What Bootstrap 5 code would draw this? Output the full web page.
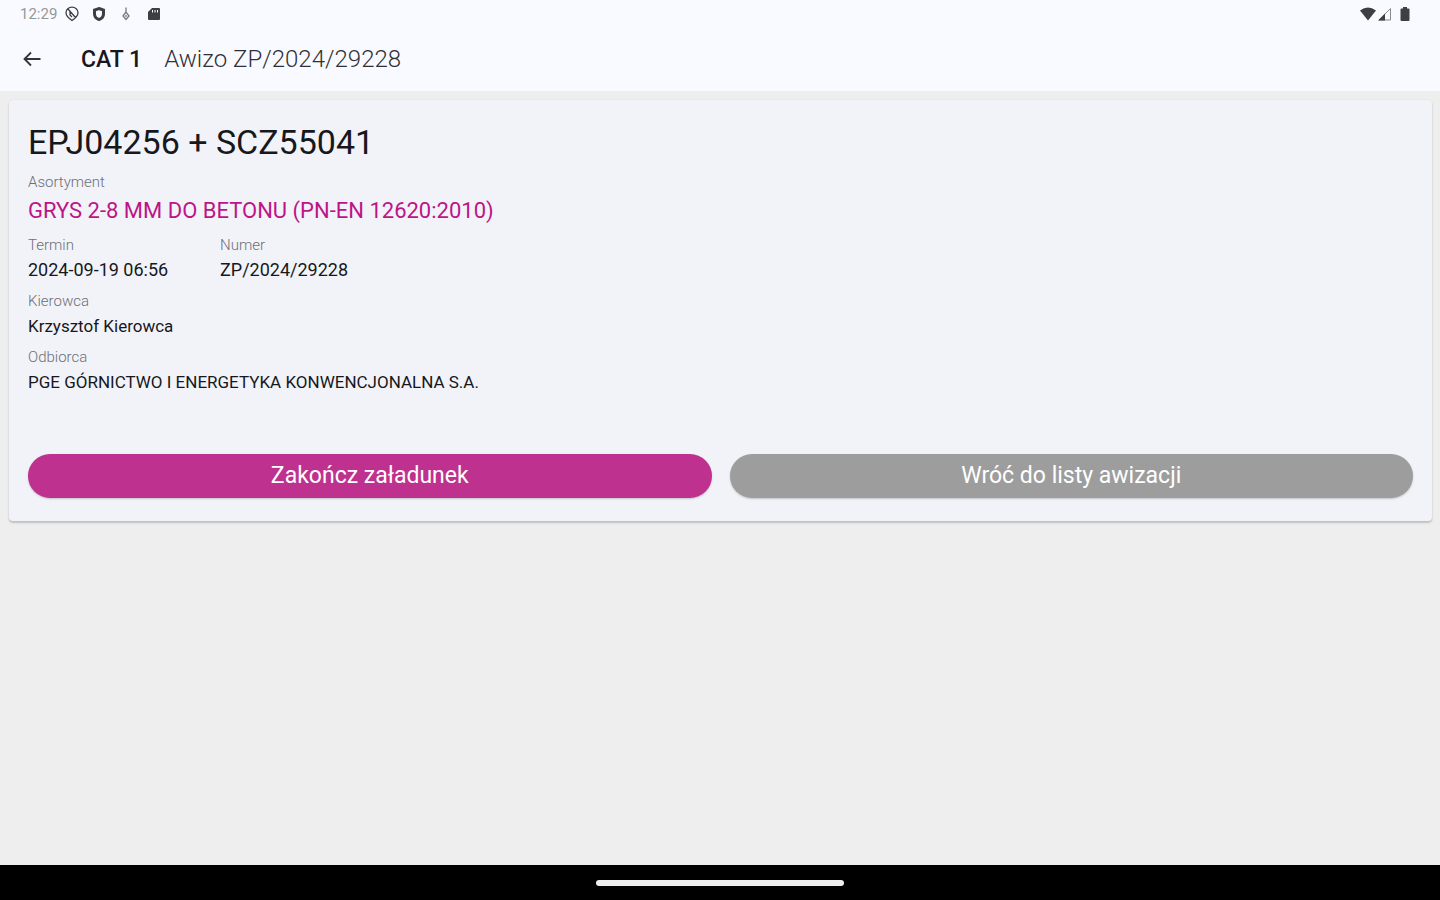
<!DOCTYPE html>
<html lang="pl">
<head>
<meta charset="utf-8">
<meta name="viewport" content="width=device-width, initial-scale=1">
<title>Awizo ZP/2024/29228</title>
<link href="https://cdn.jsdelivr.net/npm/bootstrap@5.3.0/dist/css/bootstrap.min.css" rel="stylesheet">
<style>
  body { background: #eee; color: #17181c; font-family: Roboto, "Open Sans", sans-serif; }
  .app-top { background: #f9faff; }
  .status-bar { height: 28px; padding: 0 30px 0 20px; color: #96979b; font-size: 15px; line-height: 28px; }
  .status-bar svg { display: block; color: #3e3f43; }
  .status-icons { gap: 14px; margin-left: 8px; }
  .title-bar { height: 63px; padding: 0 20px; }
  .back-btn { width: 24px; height: 24px; color: #33343a; margin-right: 37px; }
  .heading { font-size: 24px; line-height: 32px; }
  .heading-main { font-size: 23px; font-weight: 500; margin-right: 22px; }
  .heading-sub { font-weight: 300; color: #303136; }
  .notice-card { background: #f1f3f9; border: 0; border-radius: 4px; margin: 9px 8px 0 9px; padding: 18px 19px 23px; box-shadow: 0 2px 2px rgba(0,0,0,.18), 0 0 2px rgba(0,0,0,.08); }
  .vehicle { font-size: 34px; line-height: 48px; font-weight: 400; margin: 0; }
  .details { display: grid; grid-template-columns: 192px 1fr; row-gap: 6px; margin: 5px 0 58px; }
  .details dt { font-size: 15px; line-height: 22px; font-weight: 300; color: #6e6f75; }
  .details dd { font-size: 17px; line-height: 28px; margin: 0; }
  .details .figures { font-size: 18px; }
  .details .product { font-size: 22px; line-height: 35px; color: #bd1488; }
  .wide { grid-column: 1 / -1; }
  .action { --bs-btn-color: #fff; --bs-btn-hover-color: #fff; --bs-btn-active-color: #fff; padding: 0; border: 0; font-size: 23px; line-height: 44px; box-shadow: 0 1px 2px rgba(0,0,0,.2); }
  .action-finish { --bs-btn-bg: #be318e; --bs-btn-hover-bg: #a82a7d; --bs-btn-active-bg: #97226f; }
  .action-return { --bs-btn-bg: #9d9d9d; --bs-btn-hover-bg: #8c8c8c; --bs-btn-active-bg: #7d7d7d; }
  .actions { gap: 18px; }
  .system-nav { height: 35px; background: #000; }
  .home-pill { width: 248px; height: 6px; background: #eee; }
</style>
</head>
<body class="d-flex flex-column min-vh-100">
<header class="app-top">
  <div class="status-bar d-flex align-items-center">
    <span>12:29</span>
    <div class="status-icons d-flex align-items-center">
      <svg width="14" height="16" viewBox="0 0 14 16" fill="none" stroke="currentColor" stroke-width="1.3"><path d="M7 14.500C4 12.500 1 10 1 6.800A6 5.600 0 0 1 13 6.800C13 10 10 12.500 7 14.500ZM3 3L10.500 11.500M5 5.500V9L7 11"/></svg>
      <svg width="12" height="16" viewBox="0 0 12 16" fill="none" stroke="currentColor" stroke-width="3"><path d="M6 2.500L10.500 4V8C10.500 10.500 9 12.500 6 13.500C3 12.500 1.500 10.500 1.500 8V4Z"/></svg>
      <svg width="14" height="16" viewBox="-2 0 14 16" fill="none" stroke="#77787d" stroke-width="1.300"><path d="M5 1.500V6M5 6L2 10L5 13.500L8 10ZM5 9V11"/></svg>
      <svg width="14" height="16" viewBox="0 0 14 16"><path fill="currentColor" d="M5 2H12Q13 2 13 3V13Q13 14 12 14H2Q1 14 1 13V6Z"/><path stroke="#f9faff" stroke-width="1" d="M5.500 4V6.500M8 4V6.500M10.500 4V6.500"/></svg>
    </div>
    <svg class="ms-auto" width="18" height="14" viewBox="0 0 18 14"><path fill="currentColor" d="M1 3.500Q9-2.500 17 3.500L9 13.500Z"/></svg>
    <svg width="15" height="14" viewBox="-1 0 15 14"><path fill="none" stroke="#88898d" d="M1 13L12.500 1.500V13Z"/><path fill="currentColor" d="M0 13.500L7 6.500V13.500Z"/></svg>
    <svg class="ms-2" width="10" height="14" viewBox="0 0 10 14"><path fill="currentColor" d="M3 0H7V1.500H8.500Q9.500 1.500 9.500 2.500V13Q9.500 14 8.500 14H1.500Q.5 14 .5 13V2.500Q.5 1.500 1.500 1.500H3Z"/></svg>
  </div>
  <div class="title-bar d-flex align-items-center">
    <button type="button" class="back-btn btn p-0 border-0 d-flex" aria-label="Wstecz">
      <svg width="24" height="24" viewBox="0 0 24 24" fill="none" stroke="currentColor" stroke-width="1.800"><path d="M20.500 11H4.500M11 4.500L4.500 11L11 17.500"/></svg>
    </button>
    <h1 class="heading mb-0 d-flex align-items-baseline"><span class="heading-main">CAT 1</span><span class="heading-sub">Awizo ZP/2024/29228</span></h1>
  </div>
</header>
<main class="flex-grow-1">
  <section class="notice-card card">
    <h2 class="vehicle">EPJ04256 + SCZ55041</h2>
    <dl class="details">
      <div class="wide"><dt>Asortyment</dt><dd class="product">GRYS 2-8 MM DO BETONU (PN-EN 12620:2010)</dd></div>
      <div><dt>Termin</dt><dd class="figures">2024-09-19 06:56</dd></div>
      <div><dt>Numer</dt><dd class="figures">ZP/2024/29228</dd></div>
      <div class="wide"><dt>Kierowca</dt><dd>Krzysztof Kierowca</dd></div>
      <div class="wide"><dt>Odbiorca</dt><dd>PGE GÓRNICTWO I ENERGETYKA KONWENCJONALNA S.A.</dd></div>
    </dl>
    <div class="actions d-flex">
      <button type="button" class="btn rounded-pill flex-fill w-50 action action-finish">Zakończ załadunek</button>
      <button type="button" class="btn rounded-pill flex-fill w-50 action action-return">Wróć do listy awizacji</button>
    </div>
  </section>
</main>
<footer class="system-nav d-flex align-items-center justify-content-center"><div class="home-pill rounded-pill"></div></footer>
<script src="https://cdn.jsdelivr.net/npm/bootstrap@5.3.0/dist/js/bootstrap.bundle.min.js"></script>
</body>
</html>
